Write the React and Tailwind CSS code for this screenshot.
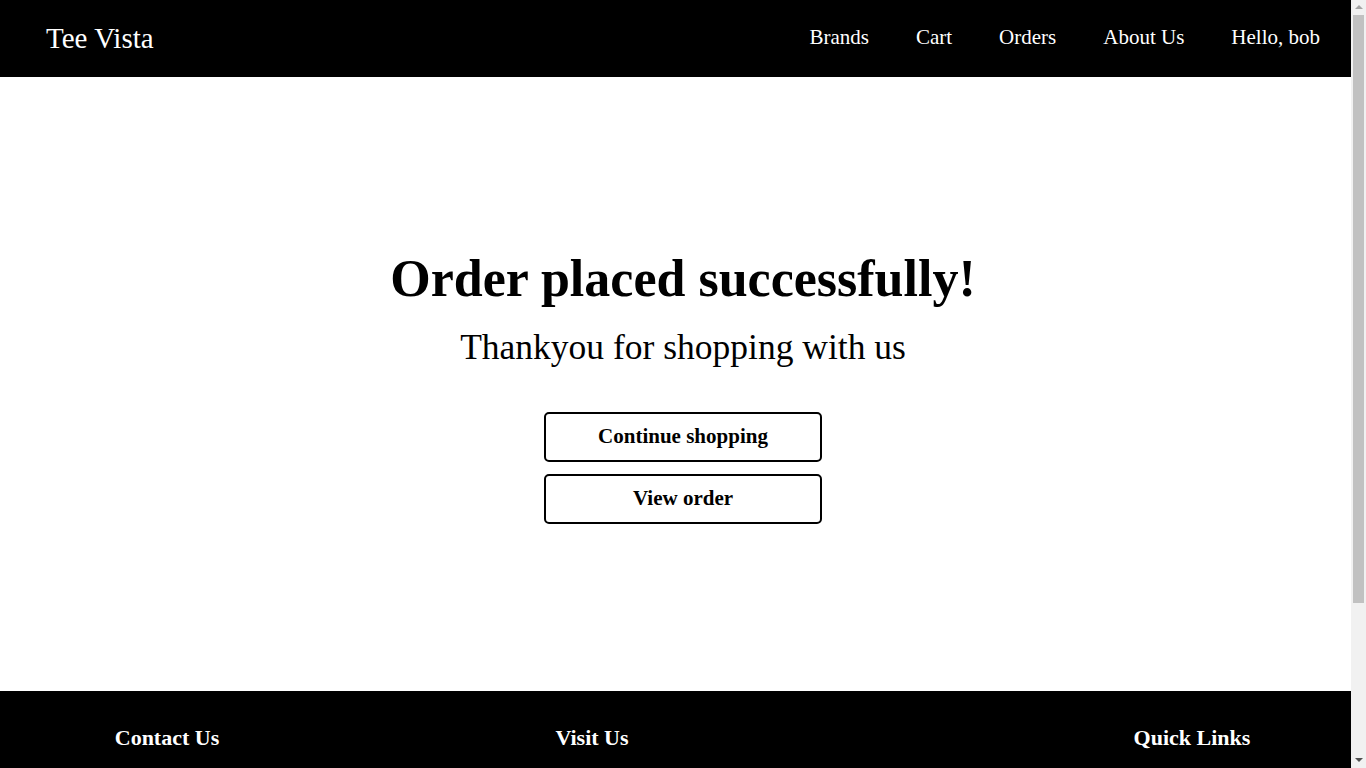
import { useState } from 'react';

const navLinks = ['Brands', 'Cart', 'Orders', 'About Us'];

const Navbar = ({ user }) => (
  <nav className="h-[77px] bg-black text-white flex items-center justify-between pl-[46px] pr-[31px]">
    <a href="#" className="text-[29px] leading-none -mt-[1px]">Tee Vista</a>
    <div className="flex items-center gap-[47px] text-[21px] -mt-[1px]">
      {navLinks.map((l) => (
        <a key={l} href="#">{l}</a>
      ))}
      <a href="#">Hello, {user}</a>
    </div>
  </nav>
);

const Footer = () => (
  <footer className="bg-black text-white pt-[30px] pb-[40px]">
    <div className="flex">
      <div className="w-[234px] ml-[50px] text-center">
        <h3 className="text-[22px] font-bold mb-4">Contact Us</h3>
        <p className="text-[16px] mb-2">support@teevista.com</p>
        <p className="text-[16px] mb-2">+91 98765 43210</p>
        <p className="text-[16px]">Mon - Sat, 10am - 7pm</p>
      </div>
      <div className="w-[234px] ml-[191px] text-center">
        <h3 className="text-[22px] font-bold mb-4">Visit Us</h3>
        <p className="text-[16px] mb-2">12 MG Road</p>
        <p className="text-[16px] mb-2">Bengaluru, Karnataka</p>
        <p className="text-[16px]">India 560001</p>
      </div>
      <div className="w-[234px] ml-auto mr-[42px] text-center">
        <h3 className="text-[22px] font-bold mb-4">Quick Links</h3>
        <ul className="text-[16px] flex flex-col gap-2">
          <li><a href="#">Brands</a></li>
          <li><a href="#">Orders</a></li>
          <li><a href="#">About Us</a></li>
        </ul>
      </div>
    </div>
    <p className="text-center text-[14px] mt-8">© 2024 Tee Vista. All rights reserved.</p>
  </footer>
);

// static stand-in for the window scrollbar seen in the screenshot
const Scrollbar = () => (
  <div className="w-[15px] h-screen bg-[#f1f1f1] flex flex-col items-center shrink-0">
    <div className="mt-[5px] w-0 h-0 border-x-[4px] border-x-transparent border-b-[4px] border-b-[#a3a3a3]" />
    <div className="mt-[6px] w-[11px] h-[588px] bg-[#c1c1c1]" />
    <div className="mt-auto mb-[6px] w-0 h-0 border-x-[4px] border-x-transparent border-t-[4px] border-t-[#505050]" />
  </div>
);

const OrderSuccess = () => {
  const [user] = useState('bob');

  return (
    <div className="h-screen flex overflow-hidden bg-white text-black font-['Liberation_Serif',serif]">
      <div className="flex-1 min-w-0 overflow-hidden">
        <Navbar user={user} />

        <main className="w-[1366px] h-[614px] flex flex-col items-center pt-[172px]">
          <h1 className="text-[52px] font-bold leading-[60px]">Order placed successfully!</h1>
          <p className="text-[35.5px] leading-[48px] mt-[14px]">Thankyou for shopping with us</p>
          <div className="mt-[41px] flex flex-col gap-[12px]">
            <button className="w-[278px] h-[50px] border-2 border-black rounded-[5px] text-[21px] font-bold">
              Continue shopping
            </button>
            <button className="w-[278px] h-[50px] border-2 border-black rounded-[5px] text-[21px] font-bold">
              View order
            </button>
          </div>
        </main>

        <Footer />
      </div>
      <Scrollbar />
    </div>
  );
};

export default OrderSuccess;
